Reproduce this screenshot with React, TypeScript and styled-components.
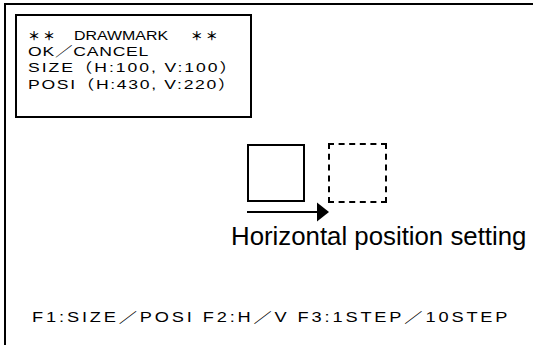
import React from 'react'
import styled, { createGlobalStyle } from 'styled-components'

const GlobalStyle = createGlobalStyle`
  html, body {
    margin: 0;
    padding: 0;
    background: #fff;
    overflow: hidden;
  }
  body {
    font-family: 'Liberation Sans', 'Noto Sans CJK JP', sans-serif;
    color: #000;
  }
`

const Screen = styled.div`
  margin: 3px 0 0 4px;
  height: 342px;
  border-top: 2px solid #000;
  border-left: 2px solid #000;
  box-sizing: border-box;
  display: flex;
  flex-direction: column;
  overflow: hidden;
`

const InfoBox = styled.div`
  margin: 9px 0 0 9px;
  width: 237px;
  height: 104px;
  box-sizing: border-box;
  border: 2px solid #000;
  padding: 11px 0 0 11px;
  display: flex;
  flex-direction: column;
  overflow: hidden;
`

const TitleRow = styled.div`
  display: flex;
  align-items: center;
  height: 16.5px;
`

const Stars = styled.span<{ $gap: number }>`
  font-family: 'Noto Sans CJK JP', sans-serif;
  font-size: 12px;
  font-weight: 700;
  letter-spacing: 3px;
  color: #000;
  margin-right: ${(p) => p.$gap}px;
  white-space: pre;
`

const TitleWord = styled.span`
  font-size: 13.5px;
  display: inline-block;
  transform: scaleX(1.18);
  transform-origin: left center;
  margin-right: 37px;
`

// the panel font is a wide gothic face: stretch Liberation Sans to match
const WideText = styled.div<{ $size: number; $spacing: number }>`
  font-size: ${(p) => p.$size}px;
  line-height: 16.5px;
  letter-spacing: ${(p) => p.$spacing}px;
  white-space: pre;
  transform: scaleX(1.3);
  transform-origin: left center;
`

const Figure = styled.div`
  margin: 26px 0 0 241px;
  display: grid;
  grid-template-columns: 58px 23px 59px;
  grid-template-rows: 58px 20px;
`

const Square = styled.div<{ $dashed?: boolean }>`
  grid-row: 1;
  grid-column: ${(p) => (p.$dashed ? 3 : 1)};
  box-sizing: border-box;
  border: 2px ${(p) => (p.$dashed ? 'dashed' : 'solid')} #000;
  ${(p) => (p.$dashed ? 'margin-top: -1px; height: 60px;' : '')}
`

const Arrow = styled.svg`
  grid-row: 2;
  grid-column: 1 / span 3;
  display: block;
`

const Caption = styled.div`
  margin: 0 0 0 225px;
  font-size: 25.8px;
  line-height: 28px;
  white-space: nowrap;
`

const Footer = styled.div`
  margin: auto 0 0 26px;
  padding-bottom: 20px;
`

export default function App() {
  return (
    <>
      <GlobalStyle />
      <Screen>
        <InfoBox>
          <TitleRow>
            <Stars $gap={16}>＊＊</Stars>
            <TitleWord>DRAWMARK</TitleWord>
            <Stars $gap={0}>＊＊</Stars>
          </TitleRow>
          <WideText $size={13.5} $spacing={0.6}>OK／CANCEL</WideText>
          <WideText $size={13.5} $spacing={1.5}>SIZE（H:100, V:100）</WideText>
          <WideText $size={13.5} $spacing={1.3}>POSI（H:430, V:220）</WideText>
        </InfoBox>
        <Figure>
          <Square />
          <Square $dashed />
          <Arrow width="140" height="20" viewBox="0 0 140 20">
            <line x1="0" y1="10" x2="72" y2="10" stroke="#000" strokeWidth="2" />
            <polygon points="70,0.5 82,10 70,19.5" fill="#000" />
          </Arrow>
        </Figure>
        <Caption>Horizontal position setting</Caption>
        <Footer>
          <WideText $size={14} $spacing={2.2}>F1:SIZE／POSI F2:H／V F3:1STEP／10STEP</WideText>
        </Footer>
      </Screen>
    </>
  )
}
